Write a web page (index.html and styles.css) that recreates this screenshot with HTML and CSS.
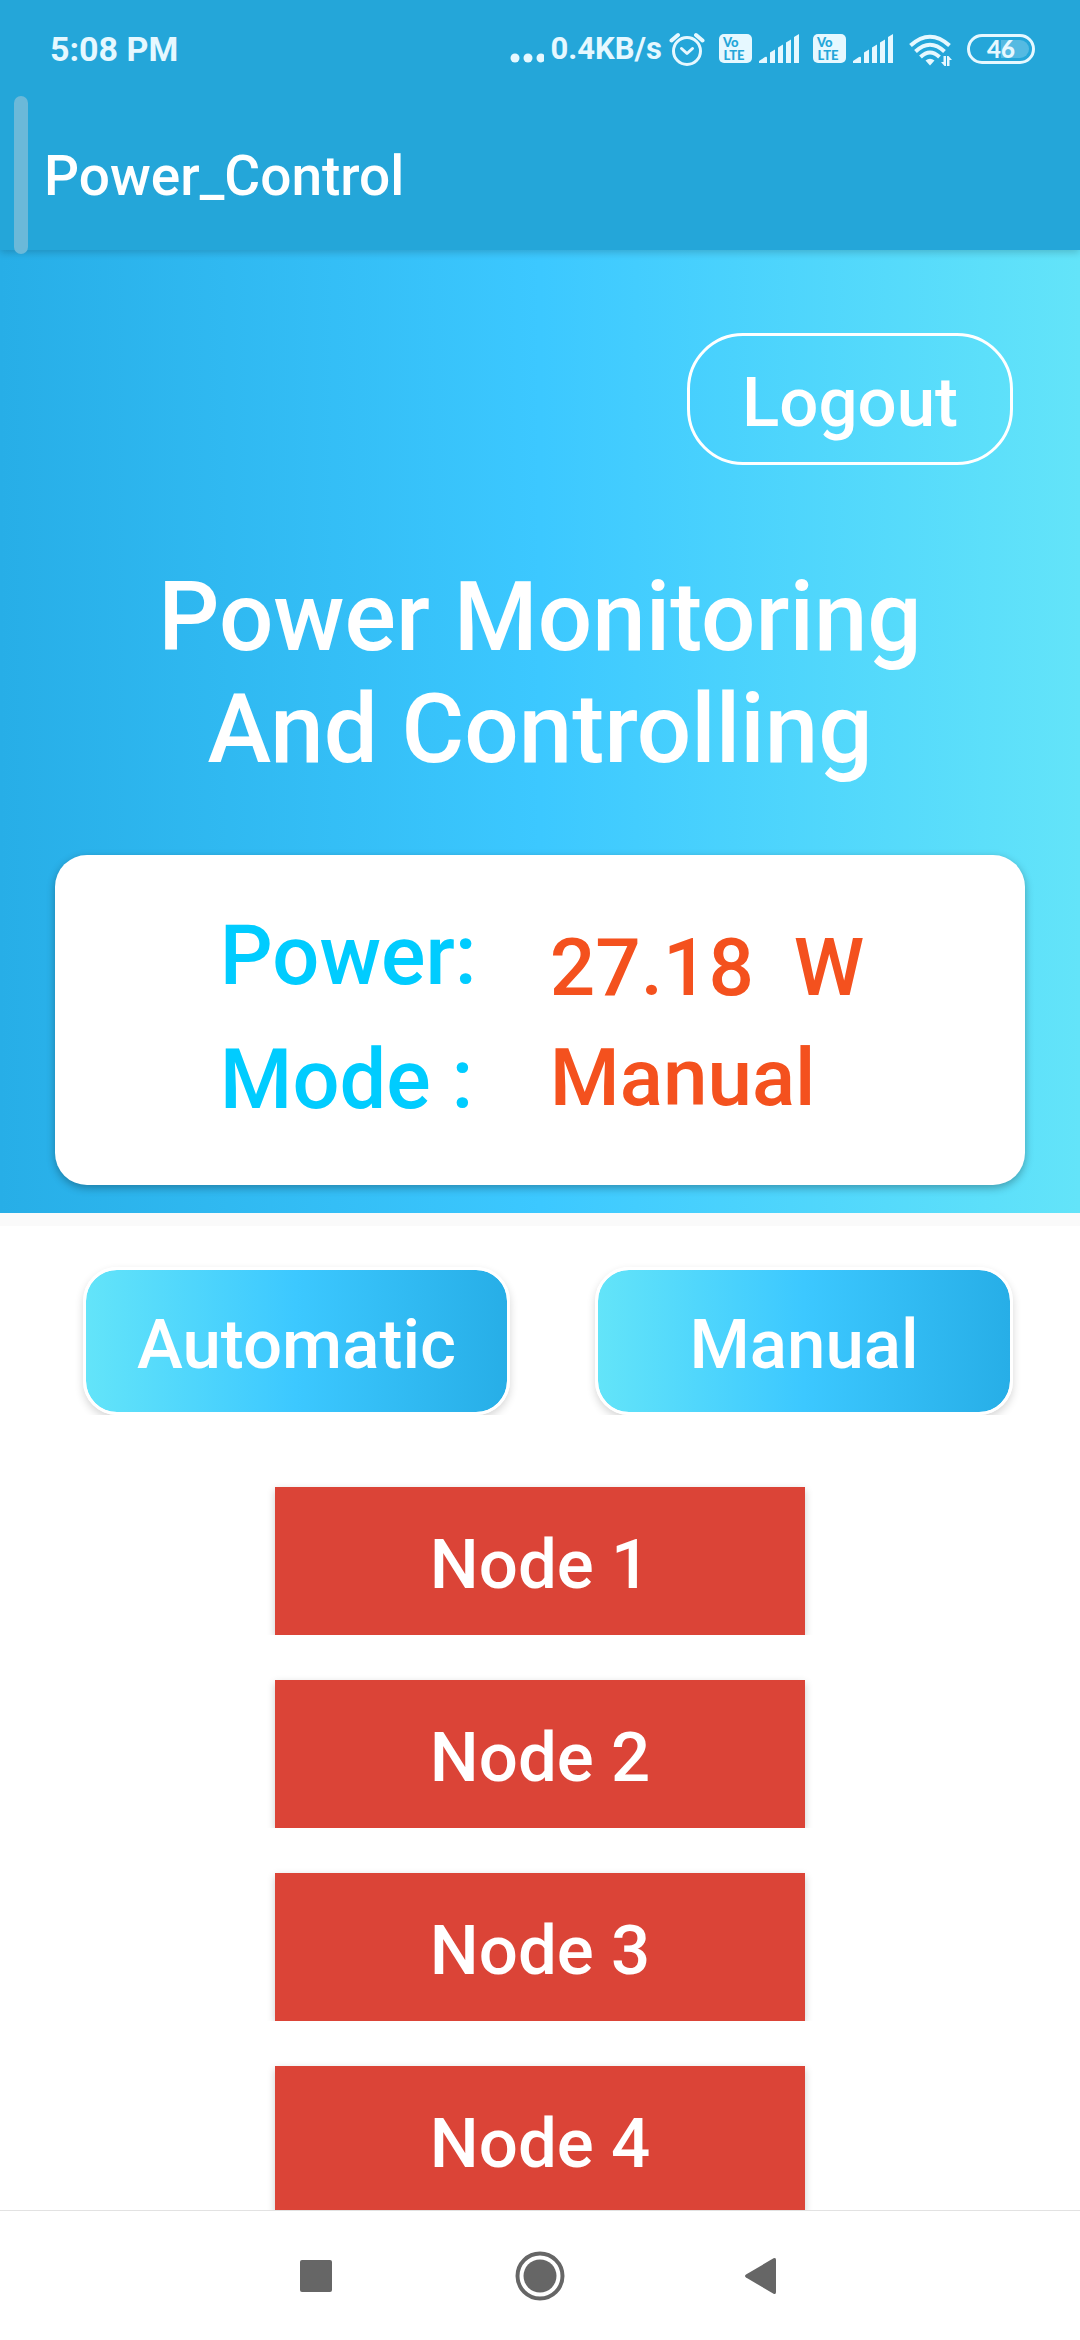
FILE: index.html
```html
<!DOCTYPE html>
<html lang="en">
<head>
<meta charset="utf-8">
<meta name="viewport" content="width=device-width, initial-scale=1">
<title>Power_Control</title>
<link rel="stylesheet" href="styles.css">
</head>
<body>
<div class="screen">
  <header class="top">
    <div class="status">
      <span class="clock">5:08 PM</span>
      <div class="indicators">
        <div class="group">
          <svg width="34" height="36" viewBox="0 0 34 36" fill="currentColor" aria-hidden="true"><circle cx="5" cy="27" r="4.500"/><circle cx="18" cy="27" r="4.500"/><circle cx="31" cy="27" r="4.500"/></svg>
          <span class="rate">0.4KB/s</span>
          <svg width="36" height="36" viewBox="0 0 36 36" fill="none" stroke="currentColor" stroke-width="3" stroke-linecap="round" stroke-linejoin="round" aria-hidden="true"><circle cx="18" cy="20" r="13.500"/><path d="M12.500 17.500l5.500 5 5.500-5"/><path d="M2.500 9.500L9 4M33.500 9.500L27 4" stroke-width="4"/></svg>
        </div>
        <div class="group">
          <svg width="33" height="30" viewBox="0 0 33 30" aria-hidden="true"><rect width="33" height="29" rx="5" fill="currentColor"/><text class="volte" x="4" y="12.500">Vo</text><text class="volte" x="4.500" y="25.500">LTE</text></svg>
          <svg width="40" height="30" viewBox="0 0 40 30" fill="currentColor" aria-hidden="true"><path d="M0 29v-2l6-4q2-1 2 1v5zM11 18.500l5-3V29h-5zM19 13.500l5-3V29h-5zM27 8.500l5-3V29h-5zM35 3l5-3v29h-5z"/></svg>
        </div>
        <div class="group">
          <svg width="33" height="30" viewBox="0 0 33 30" aria-hidden="true"><rect width="33" height="29" rx="5" fill="currentColor"/><text class="volte" x="4" y="12.500">Vo</text><text class="volte" x="4.500" y="25.500">LTE</text></svg>
          <svg width="40" height="30" viewBox="0 0 40 30" fill="currentColor" aria-hidden="true"><path d="M0 29v-2l6-4q2-1 2 1v5zM11 18.500l5-3V29h-5zM19 13.500l5-3V29h-5zM27 8.500l5-3V29h-5zM35 3l5-3v29h-5z"/></svg>
        </div>
        <svg width="46" height="36" viewBox="0 0 46 36" fill="none" stroke="currentColor" stroke-width="4" aria-hidden="true"><path d="M3.500 14.500Q23 -3 42.500 14.500M8.500 20.500Q23 7 37.500 20.500M13.500 26Q23 17 32.500 26"/><path d="M23 34.500l-4.500-5q4.500-3.500 9 0z" fill="currentColor" stroke="none"/><path d="M34 31h2.500v-6h2.500v10h-1.500zM45 29h-2.500v6H40V25h1.500z" fill="currentColor" stroke="none"/></svg>
        <svg width="68" height="30" viewBox="0 0 68 30" aria-hidden="true"><rect x="1.500" y="1.500" width="65" height="27" rx="13.500" fill="none" stroke="currentColor" stroke-width="3"/><path d="M34 6h19a9 9 0 0 1 0 18H34z" fill="currentColor" opacity=".25"/><text class="level" x="34" y="24">46</text></svg>
      </div>
    </div>
    <div class="appbar">Power_Control</div>
    <span class="edge-handle"></span>
  </header>

  <main class="content">
    <section class="hero">
      <button class="logout" type="button">Logout</button>
      <h1 class="title">Power Monitoring<br>And Controlling</h1>
      <div class="card">
        <div class="labels"><span>Power:</span><span>Mode :</span></div>
        <div class="values"><span>27.18&nbsp; W</span><span>Manual</span></div>
      </div>
    </section>
    <section class="modes">
      <button class="mode" type="button">Automatic</button>
      <button class="mode" type="button">Manual</button>
    </section>
    <section class="nodes">
      <button class="node" type="button">Node 1</button>
      <button class="node" type="button">Node 2</button>
      <button class="node" type="button">Node 3</button>
      <button class="node" type="button">Node 4</button>
    </section>
  </main>

  <nav class="navbar">
    <button class="key" type="button" aria-label="Recent apps"><svg width="50" height="50" viewBox="0 0 50 50" fill="currentColor"><rect x="9" y="9" width="32" height="32" rx="2"/></svg></button>
    <button class="key" type="button" aria-label="Home"><svg width="50" height="50" viewBox="0 0 50 50" fill="currentColor"><circle cx="25" cy="25" r="22.500" fill="none" stroke="currentColor" stroke-width="4"/><circle cx="25" cy="25" r="16.500"/></svg></button>
    <button class="key" type="button" aria-label="Back"><svg width="50" height="50" viewBox="0 0 50 50" fill="currentColor"><path d="M34.500 7.300Q37 6 37 9V41Q37 44 34.500 42.700L7 26.500Q5 25 7 23.500z"/></svg></button>
  </nav>
</div>
</body>
</html>
```
FILE: styles.css
```css
* {
  box-sizing: border-box;
}

body {
  margin: 0;
  font-family: Roboto, "Liberation Sans", sans-serif;
  font-weight: 500;
  color: #fff;
  background: #fff;
}

button {
  font: inherit;
  color: inherit;
  margin: 0;
}

svg {
  display: block;
  flex: none;
}

.screen {
  display: flex;
  flex-direction: column;
  height: 100vh;
}

/* Status bar and app bar */
.top {
  position: relative;
  z-index: 1;
  flex: none;
  background: #24a6d9;
  box-shadow: 0 2px 8px rgba(0, 0, 0, 0.2);
}

.status {
  display: flex;
  justify-content: space-between;
  align-items: center;
  height: 96px;
  padding: 1px 45px 0 50px;
  color: #e6f8ff;
}

.clock {
  font-size: 34px;
  font-weight: 700;
}

.indicators {
  display: flex;
  align-items: center;
  gap: 14px;
}

.group {
  display: flex;
  align-items: center;
  gap: 7px;
}

.rate {
  font-size: 31px;
  font-weight: 700;
}

.volte {
  font-family: Lato, sans-serif;
  font-size: 13px;
  font-weight: 900;
  fill: #24a6d9;
}

.level {
  font-family: Lato, sans-serif;
  font-size: 24px;
  font-weight: 900;
  fill: currentColor;
  text-anchor: middle;
}

.appbar {
  display: flex;
  align-items: center;
  height: 154px;
  padding: 6px 44px 0;
  font-size: 55px;
}

.edge-handle {
  position: absolute;
  left: 14px;
  top: 96px;
  width: 14px;
  height: 158px;
  border-radius: 7px;
  background: #6bb9d9;
}

/* Scrolling content */
.content {
  flex: 1;
  min-height: 0;
  overflow: hidden;
  background: #fff;
}

.hero {
  display: flex;
  flex-direction: column;
  padding: 83px 55px 28px;
  background: linear-gradient(to right, #27aee7, #3cc8ff 50%, #63e4f9);
}

.logout {
  align-self: flex-end;
  height: 132px;
  margin-right: 12px;
  padding: 7px 52px 0;
  border: 3px solid #fff;
  border-radius: 56px;
  background: none;
  font-size: 69px;
}

.title {
  margin: 96px 0 70px;
  font-size: 96px;
  font-weight: 500;
  line-height: 112px;
  text-align: center;
}

.card {
  display: grid;
  grid-template-columns: 330px auto;
  justify-content: center;
  align-items: center;
  padding: 39px 0 43px 4px;
  border-radius: 32px;
  background: #fff;
  box-shadow: 0 3px 8px rgba(0, 0, 0, 0.3);
}

.labels,
.values {
  display: flex;
  flex-direction: column;
}

.labels {
  color: #0cf;
  font-size: 83px;
  line-height: 124px;
}

.values {
  padding-top: 10px;
  color: #f4511e;
  font-size: 80px;
  line-height: 110px;
}

.modes {
  display: grid;
  grid-template-columns: 427fr 418fr;
  gap: 85px;
  padding: 41px 67px 0 83px;
  border-top: 13px solid #fafafa;
  overflow: hidden;
}

.mode {
  height: 148px;
  padding: 7px 0 0;
  border: 3px solid #fff;
  border-radius: 34px;
  background: linear-gradient(to right, #63e4f9, #3cc8ff 50%, #27aee7) padding-box;
  box-shadow: 0 4px 8px rgba(0, 0, 0, 0.16);
  font-size: 69px;
}

.nodes {
  display: flex;
  flex-direction: column;
  align-items: center;
  gap: 45px;
  padding: 72px 0;
}

.node {
  width: 530px;
  max-width: 100%;
  height: 148px;
  padding: 7px 0 0;
  border: 0;
  background: #db4437;
  box-shadow: 0 3px 8px rgba(0, 0, 0, 0.2);
  clip-path: inset(-8px -12px 0);
  font-size: 69px;
}

/* System navigation keys */
.navbar {
  display: flex;
  flex: none;
  justify-content: center;
  align-items: center;
  gap: 174px;
  height: 130px;
  border-top: 1px solid #e2e2e2;
  background: #fff;
  color: #666;
}

.key {
  padding: 0;
  border: 0;
  background: none;
}
```
